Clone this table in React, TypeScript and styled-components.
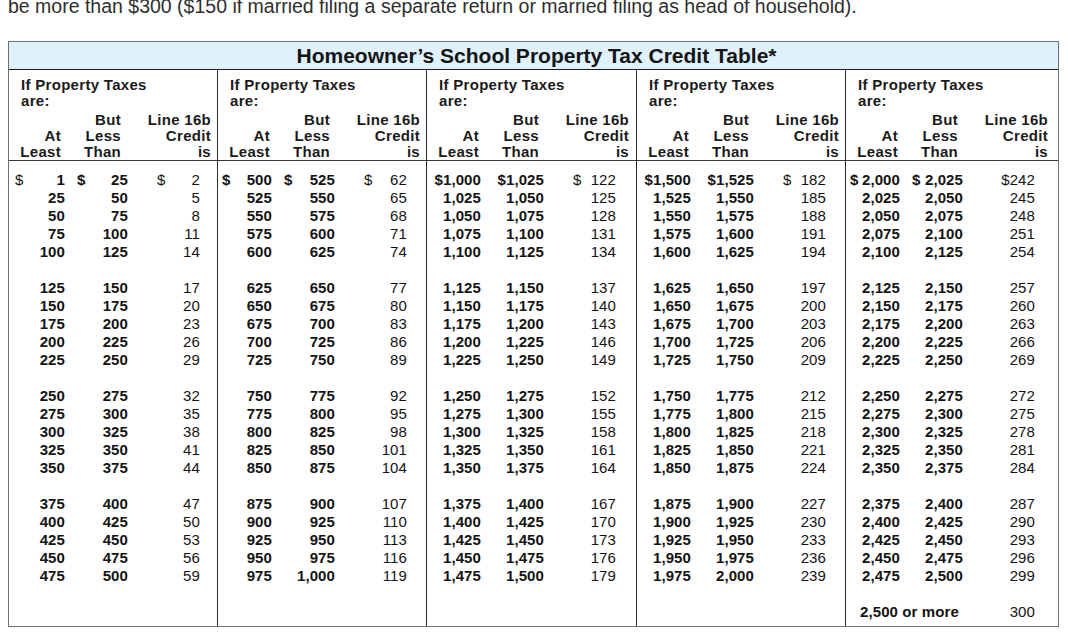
import React from "react";
import styled, { createGlobalStyle } from "styled-components";

type Money = { lead?: string; value: string; split?: boolean };
type Line = [Money, Money, Money];

const GlobalStyle = createGlobalStyle`
  body {
    margin: 0;
    background: #fff;
    font-family: "Liberation Sans", Arial, sans-serif;
    overflow: hidden;
  }
`;

const Page = styled.div`
  width: 1068px;
  padding: 0 8px;
  box-sizing: border-box;
`;

const Intro = styled.p`
  margin: -5px 0 0;
  font-size: 19.5px;
  line-height: 22px;
  color: #2e2e2e;
  white-space: nowrap;
`;

const Table = styled.div`
  margin-top: 24px;
  width: 1051px;
  box-sizing: border-box;
  border: 1px solid #707070;
`;

const TitleBar = styled.div`
  height: 27px;
  padding-left: 6px;
  background: #dff1fb;
  border-bottom: 1px solid #1c1c1c;
  display: flex;
  align-items: center;
  justify-content: center;
  font-size: 21px;
  font-weight: bold;
  color: #151515;
`;

const Columns = styled.div`
  display: grid;
  grid-template-columns: 208px 209px 210px 209px 213px;
`;

const Column = styled.div<{ $first?: boolean }>`
  display: flex;
  flex-direction: column;
  border-left: ${(p) => (p.$first ? "none" : "1px solid #2a2a2a")};
`;

const Head = styled.div`
  height: 91px;
  padding-top: 7px;
  box-sizing: border-box;
  border-bottom: 1px solid #3a3a3a;
  font-size: 15px;
  font-weight: bold;
  letter-spacing: 0.3px;
  line-height: 16px;
  color: #1b1b1b;
`;

const HeadTitle = styled.div`
  padding-left: 12px;
  margin-bottom: 3px;
`;

const HeadGrid = styled.div`
  display: grid;
  grid-template-columns: 52px 60px 90px;
  text-align: right;
`;

const Body = styled.div`
  flex: 1;
  padding: 10px 0 5px;
  display: flex;
  flex-direction: column;
  gap: 18px;
`;

const Group = styled.div`
  display: flex;
  flex-direction: column;
`;

const Row = styled.div<{ $shift?: number }>`
  display: grid;
  grid-template-columns: 54px 63px 72px;
  padding-left: ${(p) => p.$shift ?? 0}px;
  height: 18px;
  line-height: 18px;
  font-size: 15px;
  letter-spacing: 0.1px;
  color: #141414;
`;

const Cell = styled.div<{ $inset: number; $bold?: boolean }>`
  display: flex;
  justify-content: space-between;
  padding-left: ${(p) => p.$inset}px;
  font-weight: ${(p) => (p.$bold ? "bold" : "normal")};
  white-space: nowrap;
`;

const Right = styled.span`
  margin-left: auto;
`;

const Lead = styled.span`
  font-weight: normal;
`;

const BoldLead = styled.span`
  font-weight: bold;
`;

const Wide = styled.div`
  grid-column: span 2;
  padding-left: 14px;
  font-weight: bold;
  white-space: nowrap;
`;

const fmt = (n: number) => n.toLocaleString("en-US");

const firstRows: Line[] = [
  [
    { lead: "$", value: "1", split: true },
    { lead: "$", value: "25", split: true },
    { lead: "$", value: "2", split: true },
  ],
  [
    { lead: "$", value: "500", split: true },
    { lead: "$", value: "525", split: true },
    { lead: "$", value: "62", split: true },
  ],
  [{ value: "$1,000" }, { value: "$1,025" }, { lead: "$", value: "122", split: true }],
  [{ value: "$1,500" }, { value: "$1,525" }, { lead: "$", value: "182", split: true }],
  [
    { lead: "$", value: "2,000", split: true },
    { lead: "$", value: "2,025", split: true },
    { value: "$242" },
  ],
];

const groupsFor = (c: number): Line[][] =>
  [0, 1, 2, 3].map((g) =>
    [0, 1, 2, 3, 4].map((r) => {
      const i = c * 20 + g * 5 + r;
      if (i === c * 20) return firstRows[c];
      return [{ value: fmt(i * 25) }, { value: fmt((i + 1) * 25) }, { value: String(2 + 3 * i) }] as Line;
    })
  );

const insets = [4, 12, 29];

const MoneyCell = ({ m, idx, boldLead }: { m: Money; idx: number; boldLead?: boolean }) => (
  <Cell $inset={insets[idx]} $bold={idx < 2}>
    {m.split && m.lead ? boldLead && idx < 2 ? <BoldLead>{m.lead}</BoldLead> : <Lead>{m.lead}</Lead> : null}
    <Right>{m.value}</Right>
  </Cell>
);

const TableColumn = ({ c }: { c: number }) => (
  <Column $first={c === 0}>
    <Head>
      <HeadTitle>
        If Property Taxes
        <br />
        are:
      </HeadTitle>
      <HeadGrid>
        <div>
          <br />
          At
          <br />
          Least
        </div>
        <div>
          But
          <br />
          Less
          <br />
          Than
        </div>
        <div>
          Line 16b
          <br />
          Credit
          <br />
          is
        </div>
      </HeadGrid>
    </Head>
    <Body>
      {groupsFor(c).map((group, g) => (
        <Group key={g}>
          {group.map((line, r) => (
            <Row key={r} $shift={c === 0 ? 2 : 0}>
              {line.map((m, k) => (
                <MoneyCell key={k} m={m} idx={k} boldLead={c !== 0 || k > 0} />
              ))}
            </Row>
          ))}
        </Group>
      ))}
      {c === 4 && (
        <Group>
          <Row>
            <Wide>2,500 or more</Wide>
            <MoneyCell m={{ value: "300" }} idx={2} />
          </Row>
        </Group>
      )}
    </Body>
  </Column>
);

export default function App() {
  return (
    <Page>
      <GlobalStyle />
      <Intro>
        be more than $300 ($150 if married filing a separate return or married filing as head of household).
      </Intro>
      <Table>
        <TitleBar>Homeowner’s School Property Tax Credit Table*</TitleBar>
        <Columns>
          {[0, 1, 2, 3, 4].map((c) => (
            <TableColumn key={c} c={c} />
          ))}
        </Columns>
      </Table>
    </Page>
  );
}
